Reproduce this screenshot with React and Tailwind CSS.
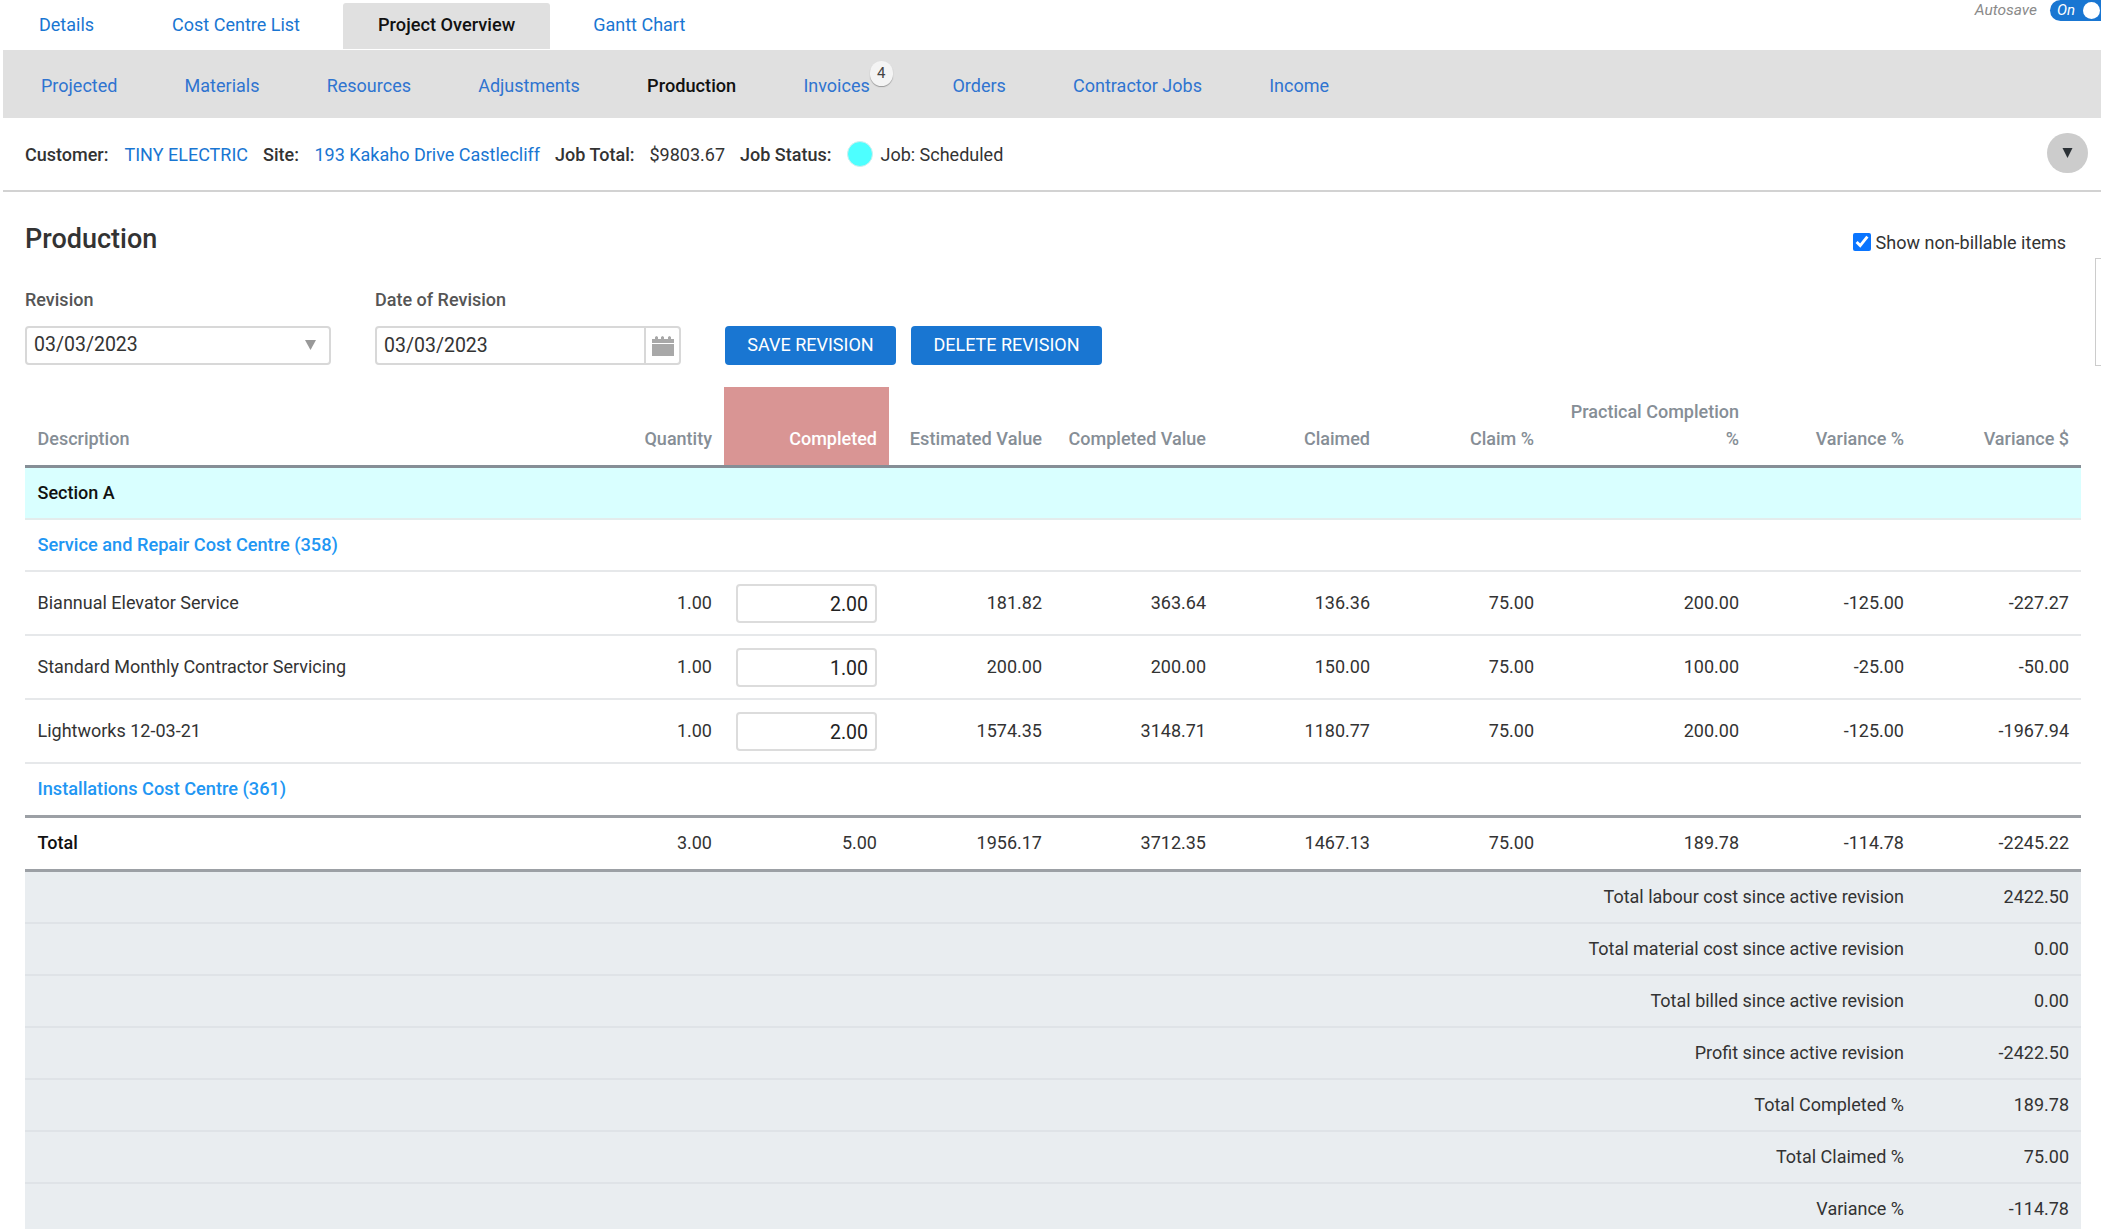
import React from "react";

const topTabs = ["Details", "Cost Centre List", "Project Overview", "Gantt Chart"];
const subTabs = ["Projected", "Materials", "Resources", "Adjustments", "Production", "Invoices", "Orders", "Contractor Jobs", "Income"];

const items = [
  { name: "Biannual Elevator Service", qty: "1.00", done: "2.00", vals: ["181.82", "363.64", "136.36", "75.00", "200.00", "-125.00", "-227.27"] },
  { name: "Standard Monthly Contractor Servicing", qty: "1.00", done: "1.00", vals: ["200.00", "200.00", "150.00", "75.00", "100.00", "-25.00", "-50.00"] },
  { name: "Lightworks 12-03-21", qty: "1.00", done: "2.00", vals: ["1574.35", "3148.71", "1180.77", "75.00", "200.00", "-125.00", "-1967.94"] },
];

const totals = ["3.00", "5.00", "1956.17", "3712.35", "1467.13", "75.00", "189.78", "-114.78", "-2245.22"];

const summary = [
  ["Total labour cost since active revision", "2422.50"],
  ["Total material cost since active revision", "0.00"],
  ["Total billed since active revision", "0.00"],
  ["Profit since active revision", "-2422.50"],
  ["Total Completed %", "189.78"],
  ["Total Claimed %", "75.00"],
  ["Variance %", "-114.78"],
];

const headers = ["Estimated Value", "Completed Value", "Claimed", "Claim %", "Practical Completion %", "Variance %", "Variance $"];

function TopNav() {
  return (
    <div className="flex h-[50px] items-start justify-between">
      <div className="flex gap-2 pt-[3px] pl-1">
        {topTabs.map((t) => (
          <div
            key={t}
            className={
              t === "Project Overview"
                ? "flex h-[46px] items-center rounded-t-[3px] bg-[#e0e0e0] px-[35px] pb-[3px] text-[18.2px] font-medium text-[#111]"
                : "flex h-[46px] items-center px-[35px] pb-[3px] text-[#1976d2]"
            }
          >
            {t}
          </div>
        ))}
      </div>
      <div className="flex items-start gap-[13px]">
        <span className="text-[15.5px] leading-[20px] text-[#8a8a8a] italic">Autosave</span>
        <div className="flex h-[21px] w-[51px] items-center justify-between rounded-l-[11px] bg-[#1976d2] pr-[1px] pl-[7px] text-[15px] text-white italic">
          On
          <span className="h-[17px] w-[17px] rounded-full bg-white"></span>
        </div>
      </div>
    </div>
  );
}

function SubNav() {
  return (
    <div className="ml-[3px] flex h-[68px] items-center gap-[67.2px] bg-[#e0e0e0] pt-[2px] pl-[38px]">
      {subTabs.map((t) => (
        <div key={t} className={t === "Production" ? "relative text-[18.2px] font-medium text-[#111]" : t === "Invoices" ? "relative mr-[15.5px] text-[#2f74d0]" : "relative text-[#2f74d0]"}>
          {t}
          {t === "Invoices" && (
            <span className="absolute top-[-11px] right-[-23px] flex h-[25px] w-[23px] items-center justify-center rounded-full bg-[#f4f4f4] text-[15px] text-[#444] shadow-[0_1px_1px_#999]">
              4
            </span>
          )}
        </div>
      ))}
    </div>
  );
}

function JobInfo() {
  return (
    <div className="relative ml-[3px] flex h-[74px] items-center border-b-2 border-[#d2d2d2] pl-[22px] text-[#333]">
      <span className="font-medium">Customer:</span>
      <span className="ml-[16px] text-[#1976d2]">TINY ELECTRIC</span>
      <span className="ml-[15px] font-medium">Site:</span>
      <span className="ml-[15.5px] text-[#1976d2]">193 Kakaho Drive Castlecliff</span>
      <span className="ml-[15px] font-medium">Job Total:</span>
      <span className="ml-[15px]">$9803.67</span>
      <span className="ml-[15px] font-medium">Job Status:</span>
      <span className="ml-[15.5px] h-[26px] w-[26px] rounded-full border border-[#cfeeee] bg-[#4dffff]"></span>
      <span className="ml-[7.5px]">Job: Scheduled</span>
      <div className="absolute top-[15px] right-[13px] flex h-[40px] w-[41px] items-center justify-center rounded-full bg-[#cccccc]">
        <svg width="13" height="10" viewBox="0 0 13 10">
          <polygon points="1.5,0 11.5,0 6.5,10" fill="#2b3136" />
        </svg>
      </div>
    </div>
  );
}

function RevisionForm() {
  return (
    <div className="flex items-end pl-[25px]">
      <div className="w-[306px]">
        <div className="mb-[13px] font-medium text-[#555]">Revision</div>
        <div className="flex h-[39px] items-center justify-between rounded-[4px] border-2 border-[#d8d8d8] pr-[13px] pb-[2px] pl-[7px] text-[19.5px] text-[#333]">
          03/03/2023
          <svg width="11" height="10" viewBox="0 0 11 10">
            <polygon points="0,0 11,0 5.5,10" fill="#999" />
          </svg>
        </div>
      </div>
      <div className="ml-[44px] w-[306px]">
        <div className="mb-[13px] font-medium text-[#555]">Date of Revision</div>
        <div className="flex h-[39px] items-stretch justify-between rounded-[4px] border-2 border-[#d8d8d8] text-[19.5px] text-[#333]">
          <span className="flex items-center pl-[7px]">03/03/2023</span>
          <span className="flex w-[35px] items-center justify-center border-l-2 border-[#d8d8d8]">
            <svg width="22" height="20" viewBox="0 0 22 20">
              <path d="M0 3h3V1l1.500-1L6 1v2h3V1l1.500-1L12 1v2h4V1l1.500-1L19 1v2h3v4H0z" fill="#a8a8a8" />
              <rect y="8" width="22" height="12" fill="#a8a8a8" />
            </svg>
          </span>
        </div>
      </div>
      <button className="ml-[44px] h-[39px] w-[171px] rounded-[4px] bg-[#1976d2] pb-[2px] text-white">SAVE REVISION</button>
      <button className="ml-[15px] h-[39px] w-[191px] rounded-[4px] bg-[#1976d2] pb-[2px] text-white">DELETE REVISION</button>
    </div>
  );
}

function ProductionTable() {
  const th = "h-[81px] border-b-[3px] border-[#868e96] px-3 pb-[13px] text-right align-bottom font-medium text-[#868e96]";
  const td = "h-[64px] border-b-2 border-[#e6e8ea] px-3 pb-[2px] text-right align-middle text-[#333]";
  return (
    <div className="mt-[22px] pl-[25px]">
      <table className="w-[2056px] table-fixed border-separate border-spacing-0">
        <colgroup>
          <col className="w-[535px]" />
          <col className="w-[164px]" />
          <col className="w-[165px]" />
          <col className="w-[165px]" />
          <col className="w-[164px]" />
          <col className="w-[164px]" />
          <col className="w-[164px]" />
          <col className="w-[205px]" />
          <col className="w-[165px]" />
          <col className="w-[165px]" />
        </colgroup>
        <thead>
          <tr>
            <th className={th + " !pl-[12.5px] !text-left"}>Description</th>
            <th className={th}>Quantity</th>
            <th className="h-[81px] border-b-[3px] border-[#868e96] bg-[#d99594] px-3 pb-[13px] text-right align-bottom font-medium text-white">Completed</th>
            {headers.map((h) => (
              <th key={h} className={h === "Estimated Value" ? th + " text-[18.2px]" : th}>{h}</th>
            ))}
          </tr>
        </thead>
        <tbody>
          <tr>
            <td colSpan={10} className="h-[52px] border-b-2 border-[#e3ecec] bg-[#d9ffff] px-3 !pl-[12.5px] pb-[2px] font-medium text-[#111]">Section A</td>
          </tr>
          <tr>
            <td colSpan={10} className="h-[52px] border-b-2 border-[#e6e8ea] px-3 !pl-[12.5px] pb-[2px] text-[18.2px] font-medium text-[#2196f3]">Service and Repair Cost Centre (358)</td>
          </tr>
          {items.map((it) => (
            <tr key={it.name}>
              <td className={td + " !pl-[12.5px] !text-left"}>{it.name}</td>
              <td className={td}>{it.qty}</td>
              <td className="h-[64px] border-b-2 border-[#e6e8ea] px-3 align-middle">
                <div className="flex h-[39px] items-center justify-end rounded-[4px] border-2 border-[#dcdcdc] pt-[2px] pr-[7px] text-[19.5px] text-[#222]">{it.done}</div>
              </td>
              {it.vals.map((v, i) => (
                <td key={i} className={td}>{v}</td>
              ))}
            </tr>
          ))}
          <tr>
            <td colSpan={10} className="h-[54px] border-b-[3px] border-[#9ca0a5] px-3 !pl-[12.5px] pb-[3px] text-[18.2px] font-medium text-[#2196f3]">Installations Cost Centre (361)</td>
          </tr>
          <tr>
            <td className="h-[54px] border-b-[3px] border-[#9ca0a5] px-3 !pl-[12.5px] pb-[2px] font-medium text-[#111]">Total</td>
            {totals.map((v, i) => (
              <td key={i} className="h-[54px] border-b-[3px] border-[#9ca0a5] px-3 pb-[2px] text-right text-[#333]">{v}</td>
            ))}
          </tr>
          {summary.map(([label, value]) => (
            <tr key={label} className="bg-[#e9edf0]">
              <td colSpan={9} className="h-[52px] border-b-2 border-[#dfe3e7] px-3 pb-[2px] text-right text-[#333]">{label}</td>
              <td className="h-[52px] border-b-2 border-[#dfe3e7] px-3 pb-[2px] text-right text-[#333]">{value}</td>
            </tr>
          ))}
        </tbody>
      </table>
    </div>
  );
}

export default function App() {
  return (
    <div className="relative h-[1229px] overflow-hidden bg-white font-[Roboto,sans-serif] text-[18px] leading-[27px]">
      <TopNav />
      <SubNav />
      <JobInfo />
      <div className="flex items-center justify-between pt-[29px] pr-[35px] pl-[25px]">
        <h1 className="text-[27px] leading-[36px] font-medium text-[#333]">Production</h1>
        <label className="flex items-center gap-[5px] pt-[6px] text-[#333]">
          <input type="checkbox" defaultChecked readOnly className="h-[18px] w-[18px] accent-[#0a75ff]" />
          Show non-billable items
        </label>
      </div>
      <div className="mt-[29px]">
        <RevisionForm />
      </div>
      <ProductionTable />
      <div className="absolute top-[258px] right-0 h-[108px] w-[6px] border-y border-l border-[#cccccc]"></div>
    </div>
  );
}
